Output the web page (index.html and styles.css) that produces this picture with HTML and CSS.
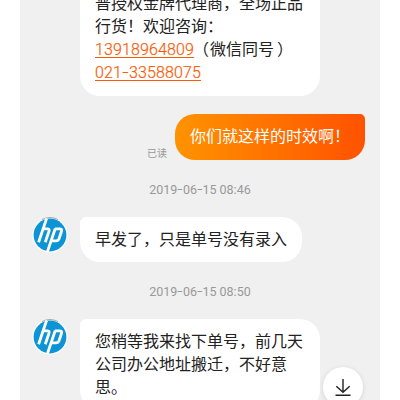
FILE: index.html
```html
<!DOCTYPE html>
<html lang="zh-CN">
<head>
<meta charset="utf-8">
<title>聊天</title>
<link rel="stylesheet" href="styles.css">
</head>
<body>
<svg class="defs" width="0" height="0" aria-hidden="true">
  <symbol id="avatar" viewBox="0 0 36 36">
    <circle cx="18" cy="18" r="17.6" fill="#fff"/>
    <path d="M10 2.6A17.3 17.3 0 0 1 26 2.6" fill="none" stroke="#aaa5a0" stroke-width="1"/>
    <circle cx="18" cy="18" r="16.4" fill="#0c94d6"/>
    <g fill="none" stroke="#fff" stroke-width="2.8" stroke-linejoin="round">
      <path d="M14.6 1.5L6.6 25.3M11.3 11.8H15.2Q17.8 11.8 17 14.3L13.3 25.3"/>
      <path d="M23.2 11.8L15.3 35M22.8 11.8H27.6Q30.4 11.8 29.5 14.3L27 21.8Q26.2 23.9 23.8 23.9H19.6"/>
    </g>
  </symbol>
</svg>
<main class="chat">
  <div class="row first">
    <div class="bubble wide">普授权金牌代理商，全场正品<br>行货！欢迎咨询：<br><a class="phone">13918964809</a><span class="open">（</span>微信同号<span class="close">）</span><br><a class="phone">021<span class="dash">-</span>33588075</a></div>
  </div>
  <div class="row mine">
    <span class="read">已读</span>
    <div class="bubble sent">你们就这样的时效啊！</div>
  </div>
  <time class="time">2019<span class="dash">-</span>06<span class="dash">-</span>15 08:46</time>
  <div class="row">
    <svg class="avatar"><use href="#avatar"/></svg>
    <div class="bubble">早发了，只是单号没有录入</div>
  </div>
  <time class="time">2019<span class="dash">-</span>06<span class="dash">-</span>15 08:50</time>
  <div class="row">
    <svg class="avatar"><use href="#avatar"/></svg>
    <div class="bubble wide">您稍等我来找下单号，前几天<br>公司办公地址搬迁，不好意<br>思。</div>
  </div>
  <button class="jump" aria-label="down">
    <svg width="18" height="20" viewBox="0 0 18 20" fill="none" stroke="#222" stroke-width="1.4"><path d="M9 1V14M2.3 8.3L9 14.3L15.7 8.3M1.5 17.3H16.5"/></svg>
  </button>
</main>
</body>
</html>
```

FILE: styles.css
```css
* {
  box-sizing: border-box;
}

body {
  margin: 0;
  height: 400px;
  overflow: hidden;
  background: #fff;
  font: 16px/23px Roboto, "Noto Sans CJK SC", sans-serif;
  color: #222;
}

.defs {
  display: block;
}

.chat {
  position: relative;
  width: 360px;
  height: 400px;
  margin: 0 20px;
  overflow: hidden;
  display: flow-root;
  background: #f0f0f0;
}

.row {
  display: flex;
  align-items: flex-start;
  padding-left: 12px;
}

.first {
  margin-top: -19px;
  padding-left: 60px;
}

.first .bubble {
  padding-bottom: 12px;
}

.avatar {
  width: 36px;
  height: 36px;
  margin-right: 12px;
}

.bubble {
  padding: 11px 15px;
  border-radius: 6px 20px 20px 20px;
  background: #fff;
  white-space: nowrap;
}

.wide {
  width: 240px;
}

.first .bubble {
  border-bottom-left-radius: 20px;
}

.mine {
  justify-content: flex-end;
  align-items: flex-end;
  margin-top: 18px;
  padding-right: 15px;
}

.sent {
  width: 190px;
  height: 46px;
  border-radius: 20px 5px 20px 20px;
  background: linear-gradient(90deg, #ff9300, #ff5200);
  color: #fff;
}

.read {
  margin-right: 8px;
  font-size: 10px;
  line-height: 13px;
  color: #999;
}

.phone {
  color: #fa5a05;
  font-weight: 300;
  letter-spacing: 0.13px;
  -webkit-text-stroke: 0.2px #fa5a05;
  text-decoration: underline;
  text-decoration-thickness: 1px;
  text-underline-offset: 2px;
}

.dash {
  display: inline-block;
  transform: translateY(-1px) scaleX(1.5);
  margin: 0 0.08em;
}

.phone .dash {
  display: inline;
  margin: 0;
  font-family: "Open Sans", sans-serif;
  font-size: 21px;
  line-height: 1px;
  font-weight: 300;
}

.open {
  display: inline-block;
  width: 16px;
  text-indent: -1px;
}

.close {
  display: inline-block;
  margin-left: 3px;
}

.time {
  display: block;
  margin: 18px 0 16px;
  text-align: center;
  font-size: 12.5px;
  line-height: 23px;
  color: #999;
}

.jump {
  position: absolute;
  left: 303px;
  top: 367px;
  width: 40px;
  height: 40px;
  padding: 1px 0 0;
  border: 0;
  border-radius: 50%;
  background: #fff;
  box-shadow: 0 1px 5px rgba(0, 0, 0, 0.12);
  display: flex;
  align-items: center;
  justify-content: center;
}
```
